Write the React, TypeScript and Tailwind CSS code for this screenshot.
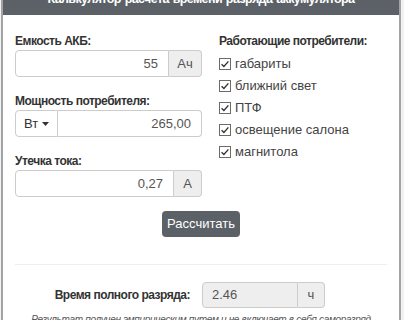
import React from "react"

function Check() {
  return (
    <svg width="12" height="12" viewBox="0 0 12 12" className="shrink-0">
      <rect x="0.5" y="0.5" width="11" height="11" fill="#fff" stroke="#6b6b6b" />
      <path d="M2.6 6.2 L4.9 8.4 L9.4 3.4" fill="none" stroke="#333" strokeWidth="1.4" />
    </svg>
  )
}

const consumers = ["габариты", "ближний свет", "ПТФ", "освещение салона", "магнитола"]

export default function App() {
  return (
    <div className="w-[404px] h-[320px] overflow-hidden bg-[#f2f2f2] font-['Liberation_Sans',Arial,sans-serif] text-[#333]">
      <div className="ml-[1px] w-[400px] h-[320px] bg-white border-x-2 border-[#a3a3a3]">
        <div className="h-[15px] bg-[#5b6167] overflow-hidden">
          <div className="mt-[-11px] text-center text-white font-bold text-[12.5px] tracking-[-0.6px] leading-[20px] [word-spacing:1px]">
            Калькулятор расчета времени разряда аккумулятора
          </div>
        </div>

        <div className="flex pl-[12px] pt-[18px]">
          <div className="w-[187px]">
            <div className="text-[12px] tracking-[-0.5px] font-bold leading-[17px]">Емкость АКБ:</div>
            <div className="flex h-[27px] text-[13px]">
              <div className="flex-1 flex items-center justify-end pr-[10px] border border-[#ccc] rounded-l-[4px] text-[#555]">55</div>
              <div className="w-[33px] flex items-center justify-center border border-l-0 border-[#ccc] rounded-r-[4px] bg-[#eee] text-[#555]">Ач</div>
            </div>

            <div className="mt-[16px] text-[12px] tracking-[-0.5px] font-bold leading-[17px]">Мощность потребителя:</div>
            <div className="flex h-[27px] text-[13px]">
              <div className="w-[43px] flex items-center justify-center gap-[4px] border border-[#ccc] rounded-l-[4px] bg-white">
                Вт
                <svg width="7" height="4" viewBox="0 0 7 4"><path d="M0 0 L7 0 L3.5 4 Z" fill="#333" /></svg>
              </div>
              <div className="flex-1 flex items-center justify-end pr-[10px] border border-l-0 border-[#ccc] rounded-r-[4px] text-[#555]">265,00</div>
            </div>

            <div className="mt-[16px] text-[12px] tracking-[-0.5px] font-bold leading-[17px]">Утечка тока:</div>
            <div className="flex h-[27px] text-[13px]">
              <div className="flex-1 flex items-center justify-end pr-[10px] border border-[#ccc] rounded-l-[4px] text-[#555]">0,27</div>
              <div className="w-[28px] flex items-center justify-center border border-l-0 border-[#ccc] rounded-r-[4px] bg-[#eee] text-[#555]">A</div>
            </div>
          </div>

          <div className="ml-[17px]">
            <div className="text-[12px] tracking-[-0.5px] font-bold leading-[17px]">Работающие потребители:</div>
            <div className="mt-[6px] flex flex-col gap-[6px]">
              {consumers.map((c) => (
                <div key={c} className="flex items-center gap-[4px] h-[16px] text-[13px] text-[#444]">
                  <Check />
                  <span>{c}</span>
                </div>
              ))}
            </div>
          </div>
        </div>

        <div className="flex justify-center mt-[14px]">
          <button className="w-[78px] h-[26px] rounded-[4px] bg-[#5b6167] text-white text-[13px]">Рассчитать</button>
        </div>

        <div className="mx-[12px] mt-[27px] border-t border-[#eee]" />

        <div className="flex items-center mt-[17px]">
          <div className="w-[199px] text-right pr-[12px] text-[12px] tracking-[-0.5px] font-bold">Время полного разряда:</div>
          <div className="flex h-[26px] text-[13px] text-[#555]">
            <div className="w-[96px] flex items-center pl-[9px] border border-[#ccc] rounded-l-[4px] bg-[#eee]">2.46</div>
            <div className="w-[27px] flex items-center justify-center border border-l-0 border-[#ccc] rounded-r-[4px] bg-[#eee]">ч</div>
          </div>
        </div>
        <div className="mt-[4px] text-center italic text-[10px] tracking-[-0.3px] text-[#555] whitespace-nowrap">
          Результат получен эмпирическим путем и не включает в себя саморазряд
        </div>
      </div>
    </div>
  )
}
